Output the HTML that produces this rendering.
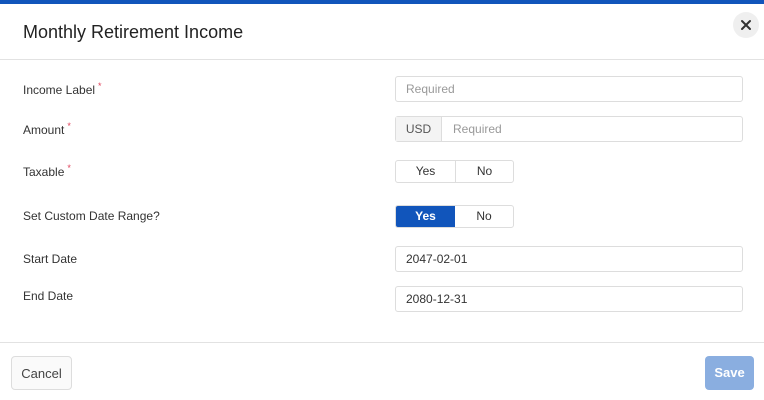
<!DOCTYPE html>
<html><head><style>
*{box-sizing:border-box;margin:0;padding:0}
body{width:764px;height:400px;background:#fff;font-family:"Liberation Sans",sans-serif;position:relative;overflow:hidden;color:#333}
.a{position:absolute}
.top{left:0;top:0;width:764px;height:4px;background:#1155bb}
.title{left:23px;top:22px;font-size:18px;color:#222}
.hr{left:0;width:764px;height:1px;background:#e2e2e2}
.close{left:733px;top:12px;width:26px;height:26px;border-radius:50%;background:#efefef}
.lbl{left:23px;font-size:12px;color:#333}
.lbl sup{color:#e0405a;font-size:9px;margin-left:3px}
.inp{left:395px;width:348px;height:26px;border:1px solid #ddd;border-radius:3px;font-size:12px;line-height:24px;padding-left:10px;color:#333}
.ph{color:#999}
.tg{left:395px;width:119px;height:23px;border:1px solid #ddd;border-radius:3px;display:flex;font-size:12px;overflow:hidden}
.tg div{width:60px;text-align:center;line-height:21px}
.tg div+div{border-left:1px solid #ddd;width:59px}
.btn{height:34px;border-radius:4px;font-size:13px;text-align:center;line-height:33px}
</style></head><body>
<div class="a top"></div>
<div class="a title">Monthly Retirement Income</div>
<div class="a close"><svg width="26" height="26" viewBox="0 0 26 26"><path d="M9 9L17 17M17 9L9 17" stroke="#333" stroke-width="2" stroke-linecap="round"/></svg></div>
<div class="a hr" style="top:59px"></div>

<div class="a lbl" style="top:81px">Income Label<sup>*</sup></div>
<div class="a inp ph" style="top:76px">Required</div>

<div class="a lbl" style="top:121px">Amount<sup>*</sup></div>
<div class="a inp" style="top:116px;padding:0;display:flex">
 <div style="width:46px;background:#f4f4f4;border-right:1px solid #ddd;text-align:center;color:#555">USD</div>
 <div class="ph" style="padding-left:11px">Required</div>
</div>

<div class="a lbl" style="top:163px">Taxable<sup>*</sup></div>
<div class="a tg" style="top:160px"><div>Yes</div><div>No</div></div>

<div class="a lbl" style="top:209px">Set Custom Date Range?</div>
<div class="a tg" style="top:205px;border-color:#ddd"><div style="background:#1155bb;color:#fff;font-weight:bold">Yes</div><div style="border-left:none">No</div></div>

<div class="a lbl" style="top:252px">Start Date</div>
<div class="a inp" style="top:246px">2047-02-01</div>
<div class="a lbl" style="top:289px">End Date</div>
<div class="a inp" style="top:286px">2080-12-31</div>

<div class="a hr" style="top:342px"></div>
<div class="a btn" style="left:11px;top:356px;width:61px;border:1px solid #ddd;background:#fafafa;color:#444">Cancel</div>
<div class="a btn" style="left:705px;top:356px;width:49px;background:#8aaee0;color:#fff;font-weight:bold">Save</div>
</body></html>
